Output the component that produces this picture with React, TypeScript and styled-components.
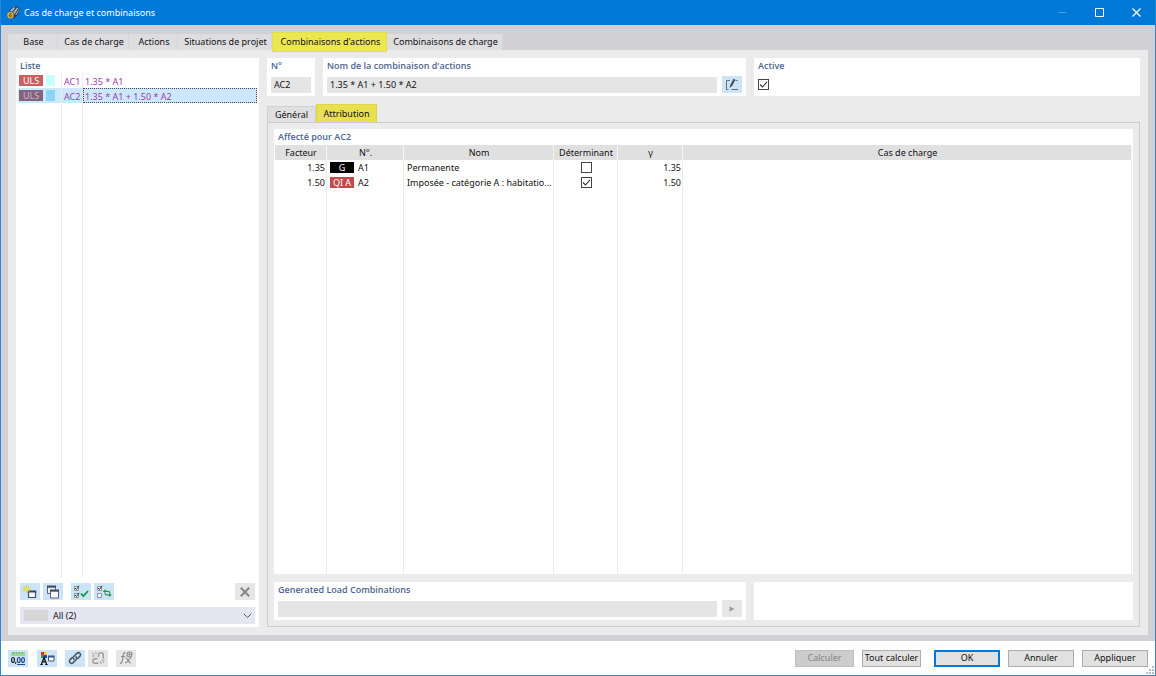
import React, { useState } from 'react';
import styled, { createGlobalStyle, css } from 'styled-components';

const Global = createGlobalStyle`
  *, *::before, *::after { box-sizing: border-box; }
  body { margin: 0; background: #fff; }
  body, button, input, select { font-family: "Noto Sans", "Open Sans", sans-serif; font-size: 9px; line-height: 12px; color: #111; }
  button, input, select { margin: 0; padding: 0; border: 0; border-radius: 0; }
`;

const Window = styled.div`
  min-height: 100vh; display: flex; flex-direction: column;
  border: 1px solid #2b86d4; border-top: 0; background: #fff;
`;
const TitleBar = styled.header`
  height: 25px; display: flex; align-items: center; background: #0078d7; color: #fff; padding-left: 6px;
`;
const Title = styled.h1`
  flex: 1; margin: 0 0 0 4px; font-size: 9px; font-weight: 400; line-height: 14px;
`;
const Caption = styled.button<{ $dim?: boolean }>`
  width: 37px; height: 25px; background: none; display: grid; place-items: center; opacity: ${p => (p.$dim ? 0.3 : 1)};
`;
const Body = styled.main`
  flex: 1; display: flex; flex-direction: column; background: #d0d0d5; padding: 7px 7px 6px;
`;
const Tabs = styled.nav`display: flex; align-items: flex-end; height: 18px;`;
const Tab = styled.button<{ $w: number; $on?: boolean }>`
  width: ${p => p.$w}px; height: ${p => (p.$on ? 20 : 16)}px; white-space: nowrap; text-align: center; padding-left: 2px;
  background: #dedee0; border-right: 1px solid #d6d6d8;
  ${p => p.$on && css`background: #ebe74e; border: 1px solid #e2dd48; margin-bottom: -2px; z-index: 1;`}
`;
const Page = styled.div`
  flex: 1; display: flex; gap: 8px; padding: 8px; background: #ebebeb;
`;
const Panel = styled.section`background: #fff; padding: 2px 4px 4px;`;
const heading = css`
  display: block; margin: 0; font-family: "Open Sans", "Noto Sans", sans-serif; font-size: 9px; line-height: 12px; font-weight: 600; color: #4c6490; white-space: nowrap;
`;
const Heading = styled.h2`${heading}`;
const FieldLabel = styled.label`${heading}`;
const ListPanel = styled(Panel)`width: 243px; display: flex; flex-direction: column; padding: 2px 2px 3px;
  & > h2 { padding-left: 2px; margin-bottom: 1px; }`;
const Detail = styled.div`flex: 1; min-width: 0; display: flex; flex-direction: column;`;
const Row = styled.div`display: flex; gap: 8px;`;
const Fill = styled(Panel)`flex: 1; height: 38px;`;
const NumberPanel = styled(Panel)`width: 48px; height: 38px;`;
const NamePanel = styled(Panel)`width: 423px; height: 38px;`;
const GeneratedPanel = styled(Panel)`width: 472px; height: 38px;`;
const FieldRow = styled.div`display: flex; align-items: center; gap: 5px; margin-top: 4px; min-height: 17px;`;
const Field = styled.input`
  flex: 1; min-width: 0; width: 100%; height: 16px; padding: 0 3px; background: #e5e5e5;
`;
const Tool = styled.button<{ $off?: boolean }>`
  width: 20px; height: 17px; display: grid; place-items: center; background: ${p => (p.$off ? '#e6e6e6' : '#cce4f7')};
`;
const Check = styled.input`
  appearance: none; display: block; width: 11px; height: 11px; border: 1px solid #444; background: #fff;
  &:checked { background: #fff url("data:image/svg+xml,%3Csvg xmlns='http://www.w3.org/2000/svg' viewBox='0 0 9 9'%3E%3Cpath d='M1 4.500L3.500 7L8 1.800' fill='none' stroke='%23333' stroke-width='1.100'/%3E%3C/svg%3E") center / 9px 9px no-repeat; }
`;

const ListTable = styled.table`
  flex: 1; width: 100%; border-collapse: separate; border-spacing: 0; table-layout: fixed; color: #a33ba8;
  td { padding: 0; height: 15px; border-right: 1px solid #ececec; white-space: nowrap; }
  td:last-child { border-right: 0; }
`;
const ListRow = styled.tr<{ $on?: boolean }>`
  ${p => p.$on && css`
    background: #cce8ff;
    td:last-child { outline: 1px dotted #445; outline-offset: -1px; }
  `}
`;
const Filler = styled.tr`&& td { height: auto; }`;
const Tags = styled.div`display: flex; gap: 3px; padding-left: 1px;`;
const Tag = styled.span<{ $c: string; $w?: number; $ink?: string }>`
  width: ${p => p.$w ?? 24}px; height: 11px; line-height: 11px; background: ${p => p.$c}; color: ${p => p.$ink ?? '#fff'}; text-align: center;
`;
const NumText = styled.span`display: block; padding: 2px 0 0 2px;`;
const Toolbar = styled.div`
  display: flex; gap: 3px; padding: 5px 2px 0;
  & > :nth-child(3) { margin-left: 5px; }
  & > :last-child { margin-left: auto; }
`;
const FilterBox = styled.div`position: relative; margin: 7px 2px 0; height: 17px;
  svg { position: absolute; right: 3px; top: 6px; pointer-events: none; }
`;
const Filter = styled.select`
  appearance: none; width: 100%; height: 17px; padding-left: 33px; background: #e6e6f2; display: block;
`;
const Swatch = styled.span`position: absolute; left: 4px; top: 3px; width: 24px; height: 11px; background: #d7d7d7;`;

const InnerTabs = styled(Tabs)`margin-top: 9px; height: 17px;`;
const InnerTab = styled.button<{ $w: number; $on?: boolean }>`
  width: ${p => p.$w}px; height: 16px; background: #e0e0e2; border: 1px solid #cfcfd4; border-bottom: 0; text-align: center;
  ${p => p.$on && css`background: #e8e04e; border-color: #dcd548; height: 19px; margin-bottom: -1px;`}
`;
const TabBody = styled.div`
  flex: 1; display: flex; flex-direction: column; gap: 8px; border: 1px solid #cbcbd3; padding: 6px;
`;
const TablePanel = styled(Panel)`flex: 1; display: flex; flex-direction: column; padding: 2px 1px 0;
  & > h2 { padding-left: 3px; margin-bottom: 2px; }`;
const Grid = styled.table`
  flex: 1; width: 100%; border-collapse: separate; border-spacing: 0; table-layout: fixed;
  th { height: 15px; padding: 0 0 0 1px; background: #e0e0e0; font-weight: 400; border-right: 1px solid #f4f4f4; }
  td { height: 15px; padding: 0 1px 0 3px; border-right: 1px solid #ececec; white-space: nowrap; overflow: hidden; text-overflow: ellipsis; }
`;
const Num = styled.td`text-align: right;`;
const Center = styled.td`input { margin: 0 auto; }`;
const Code = styled.div`display: flex; gap: 4px;`;

const Footer = styled.footer`
  height: 34px; display: flex; align-items: center; padding: 0 7px; position: relative;
`;
const FootTools = styled.div`display: flex; flex: 1; gap: 8px;
  & > :nth-child(2) { margin-left: 1px; }
  & > :nth-child(4) { margin-left: -5px; }`;
const Actions = styled.div`display: flex; gap: 8px;
  & > :nth-child(3) { margin-left: 5px; }`;
const Action = styled.button<{ $w: number; $primary?: boolean }>`
  width: ${p => p.$w}px; height: 17px; background: #e1e1e1; border: 1px solid #adadad; white-space: nowrap;
  ${p => p.$primary && css`border: 2px solid #0078d7;`}
  &:disabled { background: #cccccc; border-color: #bfbfbf; color: #838383; }
`;
const Grip = styled.svg`position: absolute; right: 1px; bottom: 1px;`;

const Svg = ({ w = 16, h = 14, children }: { w?: number; h?: number; children: React.ReactNode }) => (
  <svg width={w} height={h} viewBox={`0 0 ${w} ${h}`} fill="none" aria-hidden="true">{children}</svg>
);

const AppIcon = () => (
  <Svg w={13} h={13}>
    <path d="M2.500 4L6 1l5-.5 1.800 3L11 8.500 7 12.500 4 9z" fill="#2c3d55" />
    <path d="M3 4.500L6.500 1.200l1.800.5L5 6zM6 6.500l4-5 1.500.5L7.500 8z" fill="#9fb4c8" />
    <path d="M8 8.500l3.500-5 .8.500L9.500 9z" fill="#7f95ab" />
    <circle cx="3.500" cy="9.300" r="3.200" fill="#e3b32b" />
    <path d="M4.800 7.500C2.800 7 2 8.800 2.300 10c.4 1.500 2.500 1.200 2.500-.1 0-1.300-1.900-1.300-2.400-.3" stroke="#6b4b10" strokeWidth=".9" />
  </Svg>
);
const NewIcon = () => (
  <Svg><path d="M6.500 6.500h7v6h-7z" fill="#f5f8fb" stroke="#474d60" strokeWidth="1.200" /><path d="M6 5.500h8.200v2H6z" fill="#39435f" />
    <path d="M4.500 0v8M.5 4h8M1.700 1.200l5.600 5.600M7.300 1.200L1.700 6.800" stroke="#dfc024" strokeWidth=".9" /><circle cx="4.500" cy="4" r="2" fill="#f6e34b" /></Svg>
);
const CopyIcon = () => (
  <Svg><path d="M2.500 1.500h8v7h-8z" fill="#eef3f8" stroke="#5b6275" /><path d="M2 .500h9v2.200H2z" fill="#464c5e" />
    <path d="M5.500 5.500h8v7.500h-8z" fill="#f7fafc" stroke="#5b6275" /><path d="M5 4.500h9v2.200H5z" fill="#464c5e" /></Svg>
);
const TickPair = ({ mixed }: { mixed?: boolean }) => (
  <>
    <path d="M1.500 1.500h4v4h-4zM1.500 8.500h4v4h-4z" fill="#f2f6fa" stroke="#8b959d" />
    <path d={mixed ? 'M2 3l1.500 1.500L6 .8' : 'M2 3l1.500 1.500L6 .8M2 10l1.500 1.500L6 7.800'} stroke="#333" />
  </>
);
const CheckAllIcon = () => (
  <Svg><TickPair /><path d="M8 8.500l2.300 2.700L15 6" stroke="#159a3c" strokeWidth="1.800" /></Svg>
);
const InvertIcon = () => (
  <Svg><TickPair mixed /><path d="M8.500 6.300h3.300c1.300 0 2 .7 2.200 1.500M14 9.800h-3c-1.300 0-2-.6-2.300-1.300" stroke="#219a45" strokeWidth="1.300" />
    <path d="M9.500 4v4.200L6.800 6.200zM13 7.800V12l2.700-2.100z" fill="#219a45" /></Svg>
);
const DeleteIcon = () => <Svg w={12} h={12}><path d="M1.800 1.800l8.400 8.400M10.200 1.800l-8.400 8.400" stroke="#8a8a8a" strokeWidth="2.200" /></Svg>;
const EditIcon = () => (
  <Svg w={14} h={13}><path d="M5 2.500H1.500v9H3.500M6.500 11.500h6.500M10.500 2.500h2" stroke="#66707a" />
    <path d="M4.600 10l.6-3L8.400.8l2 1L7.200 8z" fill="#4a545e" /></Svg>
);
const DecimalsIcon = () => (
  <Svg w={18} h={15}><path d="M2 1h14v4H2z" fill="#9bd798" /><path d="M4.500 1v2M7.500 1v2M10.500 1v2M13.500 1v2" stroke="#6fb56f" />
    <ellipse cx="4" cy="9" rx="1.400" ry="2.500" stroke="#222" strokeWidth="1.200" /><path d="M7 10.800l-.6 2" stroke="#222" strokeWidth="1.200" />
    <ellipse cx="9.800" cy="9" rx="1.400" ry="2.500" stroke="#224c86" strokeWidth="1.200" /><ellipse cx="14" cy="9" rx="1.400" ry="2.500" stroke="#224c86" strokeWidth="1.200" />
    <path d="M8 13.500h8" stroke="#224c86" /></Svg>
);
const DisplayIcon = () => (
  <Svg w={16} h={15}><path d="M2 1h3v3H2z" fill="#e3262a" /><path d="M5 1h3v3H5z" fill="#f5d51e" /><path d="M2 4h3v3H2z" fill="#2aa04a" /><path d="M5 4h3v3H5z" fill="#2440c8" />
    <path d="M2.500 13L5 6.500 7.500 13M3.500 10.800h3M1.300 13.500h2.500M6.200 13.500h2.500" stroke="#111" strokeWidth="1.200" />
    <path d="M9.500 5.500h5.500v4.500H9.500z" fill="#fff" stroke="#3e5382" /><path d="M9 4.500h6.500v2H9z" fill="#3e5382" /></Svg>
);
const LinkIcon = () => (
  <Svg w={14} h={14}><g stroke="#4b555f" strokeWidth="1.500" strokeLinecap="round"><path d="M6 8.300c-1-1-.9-2.200 0-3.100l2.800-2.800c2.300-2 4.900.7 3 3L9.800 7.400" />
    <path d="M8 5.700c1 1 .9 2.200 0 3.100l-2.800 2.800c-2.300 2-4.900-.7-3-3l2-2" /></g></Svg>
);
const UnlinkIcon = () => (
  <Svg w={14} h={14}><g stroke="#9a9a9a" strokeWidth="1.400"><path d="M7.500 6V4.200c0-3.400 4.800-3.400 4.800 0v3.300M6.500 7.700H4.300c-3.200 0-3.200 4.600 0 4.600h3" />
    <path d="M1 2l2 1.500M5 1v2.500M1 5h3M9.500 10l.5 3M11 9.500l2 2.500M11.500 9h2" strokeWidth=".9" /></g></Svg>
);
const FormulaIcon = () => (
  <Svg w={15} h={14}><g stroke="#8d8d8d" strokeWidth="1.200"><path d="M6.500 2C4.500 1 4.300 3 4 5.500S3.500 12.500 1 12.500M2 5.500h4" />
    <path d="M6.500 6.500c2 0 2.500 5.500 5.500 5.500M12.500 6.500c-2 0-4 5.500-6.500 5.500" /><circle cx="10.500" cy="3.500" r="2.500" /><path d="M9 3.500h3M10.500 2v3" strokeWidth=".9" /></g></Svg>
);

const App = () => {
  const [active, setActive] = useState(true);
  return (
    <>
      <Global />
      <Window>
        <TitleBar>
          <AppIcon />
          <Title>Cas de charge et combinaisons</Title>
          <Caption $dim aria-label="Réduire"><Svg w={9} h={9}><path d="M0 4.500h8" stroke="#fff" /></Svg></Caption>
          <Caption aria-label="Agrandir"><Svg w={9} h={9}><path d="M.5.5h8v8h-8z" stroke="#fff" /></Svg></Caption>
          <Caption aria-label="Fermer"><Svg w={9} h={9}><path d="M.5.5l8 8M8.500.5l-8 8" stroke="#fff" strokeWidth="1.200" /></Svg></Caption>
        </TitleBar>
        <Body>
          <Tabs>
            <Tab $w={50}>Base</Tab>
            <Tab $w={71}>Cas de charge</Tab>
            <Tab $w={49}>Actions</Tab>
            <Tab $w={94}>Situations de projet</Tab>
            <Tab $w={115} $on>Combinaisons d'actions</Tab>
            <Tab $w={116}>Combinaisons de charge</Tab>
          </Tabs>
          <Page>
            <ListPanel>
              <Heading>Liste</Heading>
              <ListTable>
                <colgroup><col style={{ width: 44 }} /><col style={{ width: 21 }} /><col /></colgroup>
                <tbody>
                  <ListRow>
                    <td><Tags><Tag $c="#cb5f5f">ULS</Tag><Tag $c="#c8ffff" $w={9} /></Tags></td>
                    <td><NumText>AC1</NumText></td><td><NumText>1.35 * A1</NumText></td>
                  </ListRow>
                  <ListRow $on>
                    <td><Tags><Tag $c="#84637f" $ink="#c3b7cc">ULS</Tag><Tag $c="#8dd3f3" $w={9} /></Tags></td>
                    <td><NumText>AC2</NumText></td><td><NumText>1.35 * A1 + 1.50 * A2</NumText></td>
                  </ListRow>
                  <Filler><td /><td /><td /></Filler>
                </tbody>
              </ListTable>
              <Toolbar>
                <Tool aria-label="Nouveau"><NewIcon /></Tool>
                <Tool aria-label="Copier"><CopyIcon /></Tool>
                <Tool aria-label="Tout sélectionner"><CheckAllIcon /></Tool>
                <Tool aria-label="Inverser la sélection"><InvertIcon /></Tool>
                <Tool $off aria-label="Supprimer"><DeleteIcon /></Tool>
              </Toolbar>
              <FilterBox>
                <Filter aria-label="Filtre"><option>All (2)</option></Filter>
                <Swatch />
                <Svg w={9} h={6}><path d="M.8.8l3.700 3.700L8.200.8" stroke="#555" /></Svg>
              </FilterBox>
            </ListPanel>
            <Detail>
              <Row>
                <NumberPanel><FieldLabel htmlFor="no">N°</FieldLabel><FieldRow><Field id="no" readOnly value="AC2" /></FieldRow></NumberPanel>
                <NamePanel>
                  <FieldLabel htmlFor="name">Nom de la combinaison d'actions</FieldLabel>
                  <FieldRow><Field id="name" readOnly value="1.35 * A1 + 1.50 * A2" /><Tool aria-label="Modifier"><EditIcon /></Tool></FieldRow>
                </NamePanel>
                <Fill>
                  <FieldLabel htmlFor="active">Active</FieldLabel>
                  <FieldRow><Check id="active" type="checkbox" checked={active} onChange={e => setActive(e.target.checked)} /></FieldRow>
                </Fill>
              </Row>
              <InnerTabs>
                <InnerTab $w={49}>Général</InnerTab>
                <InnerTab $w={61} $on>Attribution</InnerTab>
              </InnerTabs>
              <TabBody>
                <TablePanel>
                  <Heading>Affecté pour AC2</Heading>
                  <Grid>
                    <colgroup>
                      <col style={{ width: 52 }} /><col style={{ width: 77 }} /><col style={{ width: 150 }} /><col style={{ width: 64 }} /><col style={{ width: 65 }} /><col />
                    </colgroup>
                    <thead><tr><th>Facteur</th><th>N°.</th><th>Nom</th><th>Déterminant</th><th>γ</th><th>Cas de charge</th></tr></thead>
                    <tbody>
                      <tr>
                        <Num>1.35</Num><td><Code><Tag $c="#000">G</Tag>A1</Code></td><td>Permanente</td>
                        <Center><Check type="checkbox" aria-label="Déterminant A1" /></Center><Num>1.35</Num><td />
                      </tr>
                      <tr>
                        <Num>1.50</Num><td><Code><Tag $c="#c24a4a">QI A</Tag>A2</Code></td><td>Imposée - catégorie A : habitatio...</td>
                        <Center><Check type="checkbox" defaultChecked aria-label="Déterminant A2" /></Center><Num>1.50</Num><td />
                      </tr>
                      <Filler><td /><td /><td /><td /><td /><td /></Filler>
                    </tbody>
                  </Grid>
                </TablePanel>
                <Row>
                  <GeneratedPanel>
                    <FieldLabel htmlFor="gen">Generated Load Combinations</FieldLabel>
                    <FieldRow><Field id="gen" readOnly value="" /><Tool $off aria-label="Suivant"><Svg w={6} h={6}><path d="M.5.5L5.500 3 .5 5.500z" fill="#999" /></Svg></Tool></FieldRow>
                  </GeneratedPanel>
                  <Fill />
                </Row>
              </TabBody>
            </Detail>
          </Page>
        </Body>
        <Footer>
          <FootTools>
            <Tool aria-label="Unités"><DecimalsIcon /></Tool>
            <Tool aria-label="Affichage"><DisplayIcon /></Tool>
            <Tool aria-label="Lier"><LinkIcon /></Tool>
            <Tool $off aria-label="Délier"><UnlinkIcon /></Tool>
            <Tool $off aria-label="Formule"><FormulaIcon /></Tool>
          </FootTools>
          <Actions>
            <Action $w={59} disabled>Calculer</Action>
            <Action $w={59}>Tout calculer</Action>
            <Action $w={66} $primary>OK</Action>
            <Action $w={66}>Annuler</Action>
            <Action $w={66}>Appliquer</Action>
          </Actions>
          <Grip width="8" height="8" viewBox="0 0 8 8" aria-hidden="true"><path d="M6 0h2v2H6zM3 3h2v2H3zM6 3h2v2H6zM0 6h2v2H0zM3 6h2v2H3zM6 6h2v2H6z" fill="#bdbdbd" /></Grip>
        </Footer>
      </Window>
    </>
  );
};

export default App;
